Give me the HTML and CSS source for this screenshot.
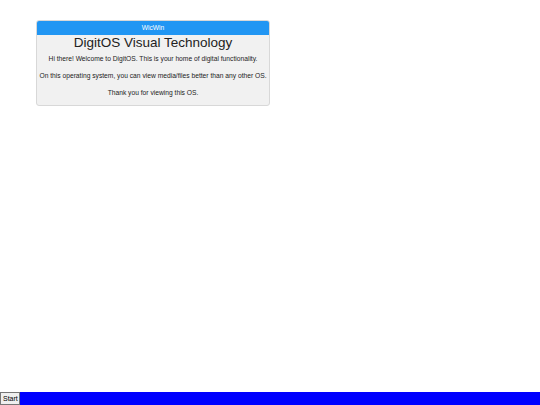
FILE: index.html
```html
<!DOCTYPE html>
<html>
<head>
<meta charset="utf-8">
<link rel="stylesheet" href="styles.css">
</head>
<body>
<div class="desktop">
  <div class="window">
    <div class="titlebar">WicWin</div>
    <div class="content">
      <h1 class="title">DigitOS Visual Technology</h1>
      <p class="line">Hi there! Welcome to DigitOS. This is your home of digital functionality.</p>
      <p class="line">On this operating system, you can view media/files better than any other OS.</p>
      <p class="line">Thank you for viewing this OS.</p>
    </div>
  </div>
</div>
<div class="taskbar">
  <button class="start">Start</button>
</div>
</body>
</html>
```

FILE: styles.css
```css
html, body {
  margin: 0;
  padding: 0;
  height: 100%;
  background: #ffffff;
  font-family: "Liberation Sans", Arial, sans-serif;
}
body {
  display: flex;
  flex-direction: column;
}
.desktop {
  flex: 1;
  padding: 20px 0 0 36px;
}
.window {
  width: 232px;
  border: 1px solid #d8d8d8;
  border-radius: 3px;
  background: #f1f1f1;
  overflow: hidden;
}
.titlebar {
  background: #2196f3;
  color: #ffffff;
  font-size: 6.7px;
  height: 14px;
  line-height: 14px;
  text-align: center;
}
.content {
  text-align: center;
  padding: 0 0 8px;
}
.title {
  margin: 0;
  font-size: 13.5px;
  font-weight: normal;
  color: #222;
  line-height: 16px;
}
.line {
  font-size: 6.7px;
  color: #222;
  margin: 4px 0 0;
  line-height: 8px;
  white-space: nowrap;
}
.line + .line {
  margin-top: 9px;
}
.taskbar {
  height: 13px;
  background: #0000ff;
  display: flex;
}
.start {
  font-family: "Liberation Sans", Arial, sans-serif;
  font-size: 7px;
  padding: 0 2px;
  margin: 0;
  height: 13px;
  width: 20px;
  background: #efefef;
  border: 1px solid #767676;
  color: #000;
}
```
